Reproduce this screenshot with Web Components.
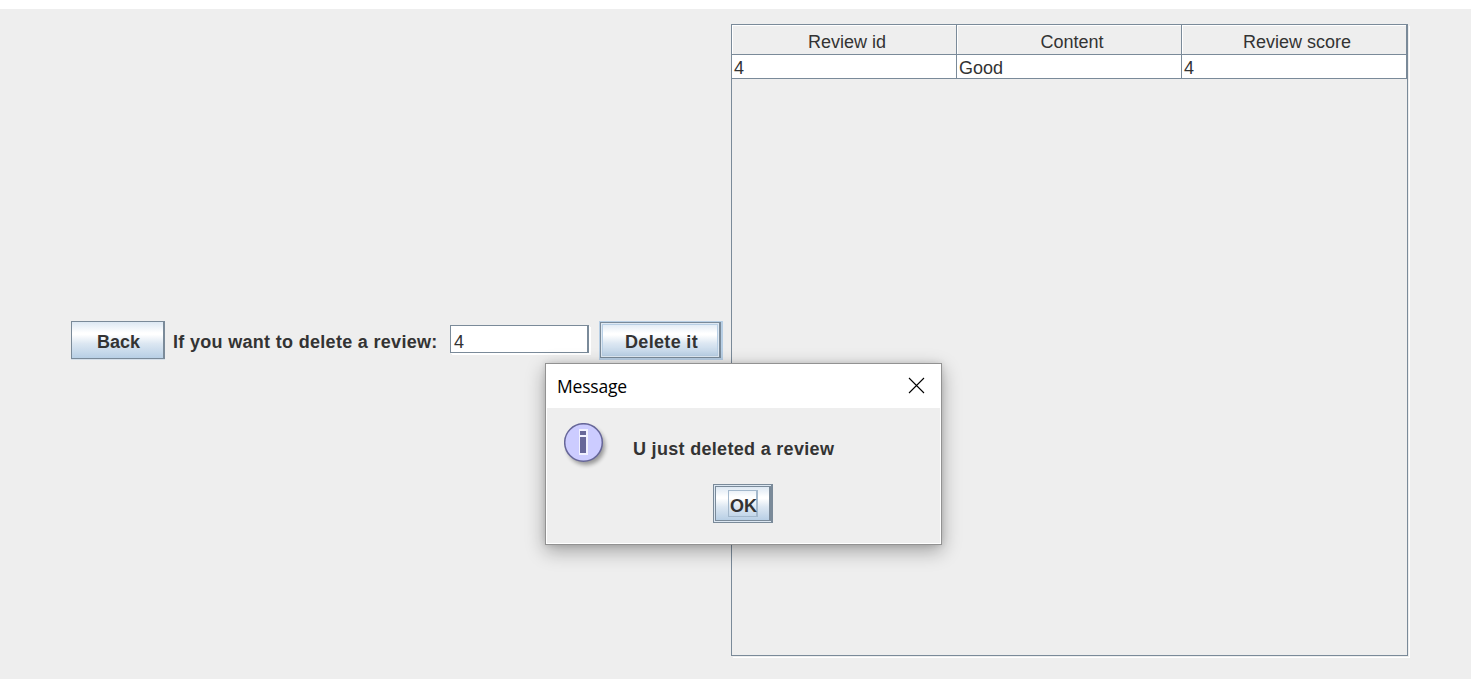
<!DOCTYPE html>
<html lang="en">
<head>
<meta charset="utf-8">
<title>Reviews</title>
<style>
html,body{margin:0;height:100%;background:#fff;overflow:hidden}
</style>
</head>
<body>
<review-app></review-app>
<script>
const define = (name, html) => {
  const t = document.createElement('template');
  t.innerHTML = html;
  customElements.define(name, class extends HTMLElement {
    constructor() {
      super();
      this.attachShadow({mode: 'open'}).append(t.content.cloneNode(true));
    }
  });
};

define('metal-button', `<style>
:host{display:block;box-sizing:border-box;height:38px;font:bold 18px/34px "Liberation Sans",sans-serif;color:#333}
button{all:unset;box-sizing:border-box;display:block;width:100%;height:100%;text-align:center;white-space:pre;border:1px solid #7a8a99;border-right-width:2px;padding:3px 0 0 2px;
background:linear-gradient(#dde8f3 0,#fff 30%,#fff 35%,#dce7f2 60%,#b8cfe5 100%)}
:host(:not([kind])){box-shadow:0 1px #d5dfe9}
:host([kind=hover]){height:39px;border:1px solid #b8cfe5;border-right-width:2px;border-bottom-width:2px}
:host([kind=hover]) button{box-shadow:inset 0 0 0 1px #dfe9f3,inset 0 0 0 2px #b8cfe5;letter-spacing:.33px;line-height:32px;padding:3px 0 0 3px}
:host([kind=default]){height:39px;border:1px solid #7a8a99;border-right-width:2px;background:#dce7f2;padding:1px 0 1px 1px}
:host([kind=default]) button{padding:0 0 0 12px;text-align:left;border-right-width:2px}
:host([kind=default]) slot{display:block;box-sizing:border-box;width:30px;height:27px;border:1px solid #a3b8cc;border-right-width:2px;padding-left:1px;line-height:30px}
</style><button><slot></slot></button>`);

define('metal-label', `<style>
:host{display:block;font:bold 18px/22px "Liberation Sans",sans-serif;letter-spacing:.31px;color:#333;white-space:pre}
</style><slot></slot>`);

define('metal-field', `<style>
:host{display:block;box-sizing:border-box;width:139px;height:28px;background:#fff;border:1px solid #7a8a99;border-right-width:2px;box-shadow:1px 1px #fff,2px 2px #fff;padding:5px 0 0 3px;font:18px/22px "Liberation Sans",sans-serif;color:#333}
</style><slot></slot>`);

define('review-table', `<style>
:host{display:block;box-sizing:border-box;width:677px;height:632px;border:1px solid #7a8a99;box-shadow:1px 1px #eee,2px 2px #fff;font:18px/22px "Liberation Sans",sans-serif;color:#333}
.row{display:grid;grid-template-columns:225px 225px 225px}
slot{display:block;box-sizing:border-box;border-right:1px solid #7a8a99;border-bottom:1px solid #7a8a99}
.head slot{height:30px;text-align:center;padding:6px 0 0 6px;box-shadow:inset 1px 1px #fff}
.body slot{height:24px;background:#fff;padding:2px 0 0 2px}
</style>
<div class="row head"><slot name="h1"></slot><slot name="h2"></slot><slot name="h3"></slot></div>
<div class="row body"><slot name="c1"></slot><slot name="c2"></slot><slot name="c3"></slot></div>`);

define('info-icon', `<style>:host{display:block;width:48px;height:48px}svg{display:block}</style>
<svg width="48" height="48" viewBox="0 0 48 48">
<defs><filter id="b" x="-30%" y="-30%" width="160%" height="160%"><feGaussianBlur stdDeviation="2"/></filter></defs>
<circle cx="22" cy="23" r="19" fill="#000" opacity=".36" filter="url(#b)"/>
<circle cx="19.5" cy="19.5" r="18.8" fill="#ccf" stroke="#669" stroke-width="1.5"/>
<path d="M15 6h9v26h-9z" fill="#f0f0ff"/>
<path d="M16 8h6v4h-6zM16 14h6v16h-6z" fill="#669"/>
</svg>`);

define('message-dialog', `<style>
:host{display:flex;flex-direction:column;box-sizing:border-box;width:397px;height:182px;background:#fff;border:1px solid #929292;box-shadow:0 6px 18px rgba(0,0,0,.32),0 0 6px rgba(0,0,0,.12)}
header{display:flex;justify-content:space-between;height:44px;box-sizing:border-box;padding:10px 16px 0 11px;font:17.5px/24px "Open Sans","Noto Sans",sans-serif;color:#000}
header span{letter-spacing:-.2px}
header svg{margin-top:3px}
main{flex:1;margin:0 1px 1px;background:#eee}
.message{display:flex;padding:15px 0 0 17px;height:61px}
.message metal-label{margin:15px 0 0 21px}
metal-button{width:60px;margin-left:166px}
</style>
<header><span>Message</span><svg width="17" height="17" viewBox="0 0 17 17"><path d="M1 1l15 15M16 1l-15 15" stroke="#000" stroke-width="1.1"/></svg></header>
<main><div class="message"><info-icon></info-icon><metal-label><slot></slot></metal-label></div><metal-button kind="default">OK</metal-button></main>`);

define('review-app', `<style>
:host{display:flex;align-items:flex-start;box-sizing:border-box;width:1471px;height:670px;margin-top:9px;padding:15px 0 0 71px;background:#eee}
.form{display:flex;align-items:flex-start;width:660px;padding-top:297px}
.back{width:94px}
metal-label{width:277px;box-sizing:border-box;padding-left:8px;margin-top:10px}
metal-field{margin:4px 10px 0 8px}
.del{width:124px}
message-dialog{position:absolute;left:545px;top:363px}
</style>
<div class="form"><metal-button class="back">Back</metal-button><metal-label>If you want to delete a review:</metal-label><metal-field>4</metal-field><metal-button class="del" kind="hover">Delete it</metal-button></div>
<review-table><span slot="h1">Review id</span><span slot="h2">Content</span><span slot="h3">Review score</span><span slot="c1">4</span><span slot="c2">Good</span><span slot="c3">4</span></review-table>
<message-dialog>U just deleted a review</message-dialog>`);
</script>
</body>
</html>
